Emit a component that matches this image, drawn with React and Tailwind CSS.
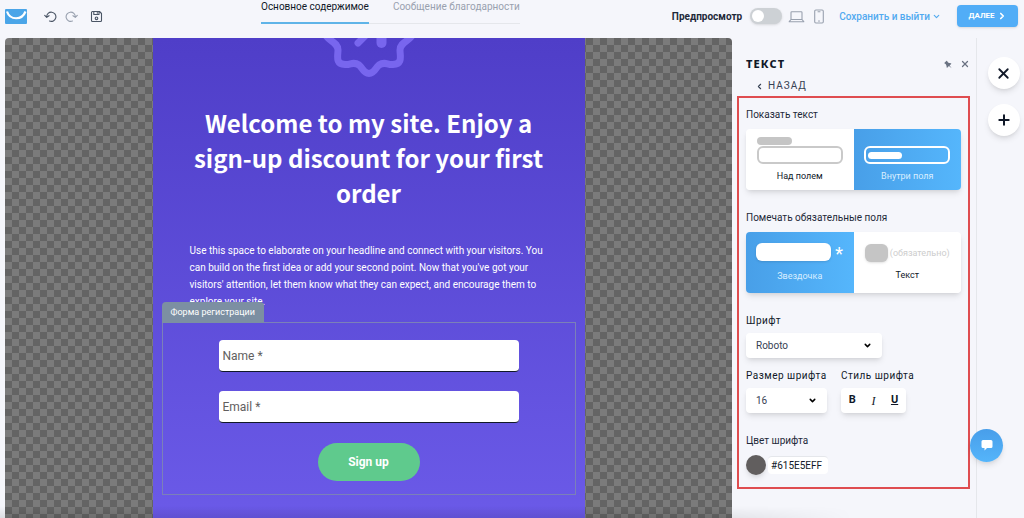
import { useState } from 'react'
import { ChevronDown, ChevronLeft, ChevronRight, Plus, X } from 'lucide-react'
import { TiPin } from 'react-icons/ti'

const CARD = 'flex h-[61px] flex-1 flex-col items-center text-[9px] leading-4'
const CARD_ON = 'bg-gradient-to-r from-[#489fe8] to-[#55b6fc] text-[#d9eeff]'
const CARD_OFF = 'bg-white text-gray-900'
const HEADING = 'block text-[10px] leading-4 text-gray-800'
const LABEL = 'block text-[10px] leading-4 tracking-wider whitespace-nowrap text-gray-900'
const ROUND = 'flex size-8 items-center justify-center rounded-full bg-white text-gray-900 shadow-md'

function Logo() {
  return (
    <svg viewBox="0 0 22 15" className="h-[15px] w-[22px]">
      <rect width="22" height="15" rx="1" fill="#4aa5e8" />
      <path d="M2 2.500C5 11.500 17 11.500 20.500 2.500" fill="none" stroke="#fff" strokeWidth="2.200" />
    </svg>
  )
}

function Icon({ children, w = 13, h = 13, className = '' }) {
  return (
    <svg width={w} height={h} viewBox={`0 0 ${w} ${h}`} className={className} fill="none" stroke="currentColor" strokeWidth="1.1" strokeLinecap="round" strokeLinejoin="round">
      {children}
    </svg>
  )
}

const Undo = ({ className }) => (
  <Icon className={className}>
    <path d="M2.700 7A4.600 4.600 0 1 1 5.500 11M.7 5.300L2.700 7.400L5 5.700" />
  </Icon>
)

const Floppy = () => (
  <Icon>
    <path d="M1.500 2.500a1 1 0 0 1 1-1H9.500L11.500 3.500V10.500a1 1 0 0 1-1 1H2.500a1 1 0 0 1-1-1zM3.800 1.700V4.500H9V1.700M7.300 2.500V3.200" />
    <circle cx="6.500" cy="8.300" r="1.300" />
  </Icon>
)

const Notebook = () => (
  <Icon w={17} h={13}>
    <path d="M3 9.500V2.500a.8.8 0 0 1 .8-.8H13.200a.8.8 0 0 1 .8.8V9.500M3 9.500H14L15.800 11.700H1.200z" />
  </Icon>
)

const Phone = () => (
  <Icon w={16} h={15}>
    <rect x="3.700" y="1" width="8.600" height="13" rx="1.200" />
    <path d="M7 2.800H9M7.500 12H8.500" />
  </Icon>
)

function Badge() {
  return (
    <svg viewBox="314 38 108 42" className="mx-auto block h-[42px] w-[108px]" fill="none" stroke="#7866ee" strokeWidth="7" strokeLinecap="round">
      <path d="M324 34C327 41 337 42 337 50C337 56 334 64 344 64.5C350 65 352 61 358 65C362 68 362 73.5 368 73.5C374 73.5 374 68 378 65C384 61 386 65 392 64.5C402 64 399 56 399 50C399 42 409 41 412 34" />
      <path d="M357 43L372 28" />
      <path d="M380.5 36V43" strokeWidth="10" />
    </svg>
  )
}

function Dropdown({ id, options, className }) {
  return (
    <div className={`relative ${className}`}>
      <select id={id} className="block h-[25px] w-full appearance-none rounded-sm bg-white pl-[10px] text-[10px] text-gray-700 shadow-md">
        {options.map(o => <option key={o}>{o}</option>)}
      </select>
      <ChevronDown size={9} strokeWidth={4} className="pointer-events-none absolute top-2 right-[10px]" />
    </div>
  )
}

function TopBar() {
  return (
    <header className="flex h-[38px] shrink-0 items-start pr-[6px] pl-[5px]">
      <div className="flex w-64 items-center pt-[9px] text-gray-600">
        <a href="#" aria-label="Главная"><Logo /></a>
        <button aria-label="Отменить" className="ml-[17px]"><Undo /></button>
        <button aria-label="Повторить" className="ml-2 text-gray-400"><Undo className="-scale-x-100" /></button>
        <button aria-label="Сохранить" className="ml-3"><Floppy /></button>
      </div>
      <nav className="flex text-[10px] leading-[14px]">
        <a href="#" className="border-b-2 border-[#5fb4e8] pb-2 text-gray-900">Основное содержимое</a>
        <a href="#" className="border-b border-gray-200 pb-[9px] pl-6 text-gray-400">Сообщение благодарности</a>
      </nav>
      <div className="ml-auto flex items-center pt-[5px]">
        <label htmlFor="preview" className="text-[10px] font-bold text-gray-800">Предпросмотр</label>
        <input
          id="preview"
          type="checkbox"
          className="ml-2 h-4 w-8 appearance-none rounded-full bg-[#cdd1d5] shadow-sm before:mt-0.5 before:ml-0.5 before:block before:size-3 before:rounded-full before:bg-white"
        />
        <button aria-label="Компьютер" className="ml-1.5 text-gray-400"><Notebook /></button>
        <button aria-label="Телефон" className="ml-1.5 text-gray-400"><Phone /></button>
        <button className="ml-3 flex items-center gap-0.5 text-[10px] font-medium text-[#51aaf0]">
          Сохранить и выйти <ChevronDown size={9} strokeWidth={3} />
        </button>
        <button className="ml-4 flex h-[22px] w-[61px] items-center justify-center gap-0.5 rounded bg-[#51adf7] text-[8px] font-bold text-white shadow">
          ДАЛЕЕ <ChevronRight size={10} strokeWidth={4} />
        </button>
      </div>
    </header>
  )
}

function Preview() {
  return (
    <main className="flex-1 overflow-hidden rounded-t bg-[repeating-conic-gradient(#646464_0_25%,#7b7b7b_0_50%)] bg-[length:14px_14px]">
      <div className="mx-auto flex h-full w-[432px] flex-col bg-gradient-to-b from-[#4f3ec8] to-[#6b5ae8] px-[9px] text-white">
        <Badge />
        <h1 className="mt-[25px] px-6 text-center font-['Noto_Sans_CJK_SC',sans-serif] text-[24px] leading-[35px] font-bold">
          Welcome to my site. Enjoy a sign-up discount for your first order
        </h1>
        <p className="mt-8 px-7 text-[10px] leading-[17px]">
          Use this space to elaborate on your headline and connect with your visitors. You can build on the first idea or add your second point. Now that you've got your visitors' attention, let them know what they can expect, and encourage them to explore your site.
        </p>
        <form className="relative mt-3 flex flex-col items-center border border-[#7b80b8] px-14 pt-[17px] pb-[13px]">
          <span className="absolute bottom-full -left-px rounded-t-sm bg-[#7c8fa2] px-[9px] text-[9px] leading-[21px]">
            Форма регистрации
          </span>
          <input type="text" aria-label="Name" placeholder="Name *" className="h-8 w-full rounded-sm border-b border-gray-900 bg-white px-1 text-xs placeholder:text-[#615e5e]" />
          <input type="email" aria-label="Email" placeholder="Email *" className="mt-[19px] h-8 w-full rounded-sm border-b border-gray-900 bg-white px-1 text-xs placeholder:text-[#615e5e]" />
          <button type="button" className="mt-5 h-[38px] w-[102px] rounded-full bg-[#5fca8d] text-xs font-bold">Sign up</button>
        </form>
      </div>
    </main>
  )
}

function Settings() {
  const [inside, setInside] = useState(true)
  const [star, setStar] = useState(true)
  const [color, setColor] = useState('#615E5EFF')

  return (
    <aside className="w-[245px] shrink-0 border-r border-gray-200 pr-[6px] pl-[5px]">
      <div className="flex items-center justify-between pt-[18px] pl-[9px] text-gray-500">
        <h2 className="font-['Noto_Sans',sans-serif] text-[11px] leading-4 font-extrabold tracking-widest text-gray-900">ТЕКСТ</h2>
        <div className="flex gap-1.5">
          <button aria-label="Закрепить"><TiPin size={11} className="-scale-x-100" /></button>
          <button aria-label="Закрыть"><X size={10} strokeWidth={3} /></button>
        </div>
      </div>
      <button className="mt-[6px] ml-[18px] flex items-center gap-1 text-[10px] leading-4 tracking-widest text-gray-700">
        <ChevronLeft size={9} strokeWidth={3} />НАЗАД
      </button>

      <div className="mt-0.5 border-2 border-[#df4d50] px-[7px] pt-[9px] pb-3">
        <h3 className={HEADING}>Показать текст</h3>
        <div className="mt-1.5 flex overflow-hidden rounded-sm shadow-md">
          <button onClick={() => setInside(false)} className={`${CARD} ${inside ? CARD_OFF : CARD_ON}`}>
            <span className="mt-2 ml-[11px] h-2 w-[35px] self-start rounded-full bg-[#c5c5c5]" />
            <span className="mt-px mb-1 h-[18px] w-[86px] rounded-md border-2 border-[#c9c9c9] bg-white" />
            Над полем
          </button>
          <button onClick={() => setInside(true)} className={`${CARD} ${inside ? CARD_ON : CARD_OFF}`}>
            <span className="mt-[17px] mb-1 flex h-[18px] w-[86px] items-center rounded-md border-2 border-current px-0.5 text-white">
              <span className="h-[7px] w-[34px] rounded-full bg-current" />
            </span>
            Внутри поля
          </button>
        </div>

        <h3 className={`${HEADING} mt-5`}>Помечать обязательные поля</h3>
        <div className="mt-1.5 flex overflow-hidden rounded-sm shadow-md">
          <button onClick={() => setStar(true)} className={`${CARD} ${star ? CARD_ON : CARD_OFF}`}>
            <span className="mt-[11px] mb-[7px] flex h-[18px] items-center gap-1 text-white">
              <span className="h-[18px] w-[75px] rounded-md bg-white shadow-sm" />
              <span className="pt-1 text-lg leading-4">*</span>
            </span>
            Звездочка
          </button>
          <button onClick={() => setStar(false)} className={`${CARD} ${star ? CARD_OFF : CARD_ON}`}>
            <span className="mt-[12px] mb-[5px] flex h-[18px] items-center gap-0.5 text-[#cdcdcd]">
              <span className="h-[18px] w-[23px] rounded-md bg-[#c5c5c5] shadow-sm" />
              <span>(обязательно)</span>
            </span>
            Текст
          </button>
        </div>

        <label htmlFor="font" className={`${LABEL} mt-5`}>Шрифт</label>
        <Dropdown id="font" options={['Roboto', 'Open Sans', 'Lato']} className="mt-1 w-[136px]" />

        <div className="mt-[10px] flex gap-[14px]">
          <div className="w-[81px]">
            <label htmlFor="size" className={LABEL}>Размер шрифта</label>
            <Dropdown id="size" options={['16', '18', '20']} className="mt-1" />
          </div>
          <div>
            <h3 className={LABEL}>Стиль шрифта</h3>
            <div className="mt-1 flex h-[25px] w-[65px] items-center justify-around rounded-sm bg-white text-[11px] text-gray-900 shadow-md">
              <button className="font-bold">B</button>
              <button className="font-['Liberation_Serif',serif] text-xs italic">I</button>
              <button className="font-bold underline">U</button>
            </div>
          </div>
        </div>

        <label htmlFor="color" className={`${HEADING} mt-5`}>Цвет шрифта</label>
        <div className="mt-1.5 flex items-center gap-0.5">
          <span className="size-5 rounded-full bg-[#615e5e] shadow-md" />
          <input id="color" value={color} onChange={e => setColor(e.target.value)} className="h-[18px] w-[60px] rounded-sm border-t border-gray-200 bg-white pl-[3px] text-[10px] text-gray-900" />
        </div>
      </div>
    </aside>
  )
}

export default function App() {
  return (
    <div className="relative flex h-screen flex-col overflow-hidden bg-[#f5f6fb] font-[Roboto,sans-serif]">
      <TopBar />
      <div className="flex min-h-0 flex-1 pl-[5px]">
        <Preview />
        <Settings />
        <div className="flex w-[47px] shrink-0 flex-col items-center gap-[15px] pt-[19px] pl-1.5">
          <button aria-label="Закрыть панель" className={ROUND}><X size={17} strokeWidth={2.5} /></button>
          <button aria-label="Добавить" className={ROUND}><Plus size={16} strokeWidth={3} /></button>
        </div>
      </div>
      <div className="pointer-events-none absolute bottom-0 left-0 h-3 w-5/6 bg-gradient-to-t from-black/10 to-transparent mask-r-from-80%" />
      <button aria-label="Чат" className="absolute right-[21px] bottom-14 flex size-[33px] items-center justify-center rounded-full bg-gradient-to-b from-[#489eea] to-[#55b5fa] shadow-md">
        <svg viewBox="0 0 12 11" className="h-[11px] w-3" fill="#fff">
          <path d="M2 0h8a1.500 1.500 0 0 1 1.500 1.500v5a1.500 1.500 0 0 1-1.500 1.500H6L3.500 10.500V8H2A1.500 1.500 0 0 1 .5 6.500v-5A1.500 1.500 0 0 1 2 0z" />
        </svg>
      </button>
    </div>
  )
}
